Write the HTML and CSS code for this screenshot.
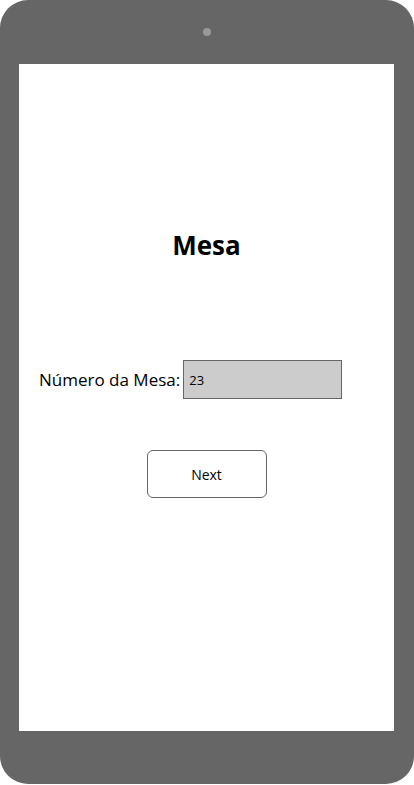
FILE: index.html
```html
<!DOCTYPE html>
<html lang="pt">
<head>
<meta charset="utf-8">
<title>Mesa</title>
<link rel="stylesheet" href="styles.css">
</head>
<body>
<div class="device">
  <div class="bezel-top"><span class="camera"></span></div>
  <main class="screen">
    <h1 class="title">Mesa</h1>
    <div class="form-row">
      <label class="label" for="mesa">Número da Mesa:</label>
      <input class="input" id="mesa" type="text" value="23">
    </div>
    <button class="next" type="button">Next</button>
  </main>
  <div class="bezel-bottom"></div>
</div>
</body>
</html>
```
FILE: styles.css
```css
html, body {
  margin: 0;
  padding: 0;
  background: #ffffff;
}
body {
  font-family: "Open Sans", "Noto Sans", "Liberation Sans", sans-serif;
  color: #000;
}
.device {
  width: 414px;
  height: 784px;
  background: #666666;
  border-radius: 28px;
  display: flex;
  flex-direction: column;
}
.bezel-top {
  height: 64px;
  width: 100%;
  display: flex;
  justify-content: center;
  padding-top: 28px;
  box-sizing: border-box;
}
.camera {
  width: 8px;
  height: 8px;
  border-radius: 50%;
  background: #999999;
}
.screen {
  width: 375px;
  height: 667px;
  margin-left: 19px;
  background: #ffffff;
  display: flex;
  flex-direction: column;
  align-items: center;
  box-sizing: border-box;
  padding-top: 162px;
}
.title {
  margin: 0;
  font-size: 26px;
  font-weight: 700;
  line-height: 38px;
}
.form-row {
  margin-top: 96px;
  align-self: stretch;
  padding-left: 20px;
  display: flex;
  align-items: center;
  gap: 3px;
}
.label {
  font-size: 17px;
  line-height: 24px;
}
.input {
  width: 159px;
  height: 39px;
  box-sizing: border-box;
  border: 1px solid #666666;
  background: #cccccc;
  font-family: inherit;
  font-size: 13px;
  color: #000;
  padding: 0 5px;
  margin: 0;
  outline: none;
}
.next {
  margin-top: 51px;
  width: 120px;
  height: 48px;
  border: 1px solid #666666;
  border-radius: 6px;
  background: #ffffff;
  font-family: inherit;
  font-size: 14px;
  color: #000;
  cursor: pointer;
}
.bezel-bottom {
  flex: 1;
}
```
